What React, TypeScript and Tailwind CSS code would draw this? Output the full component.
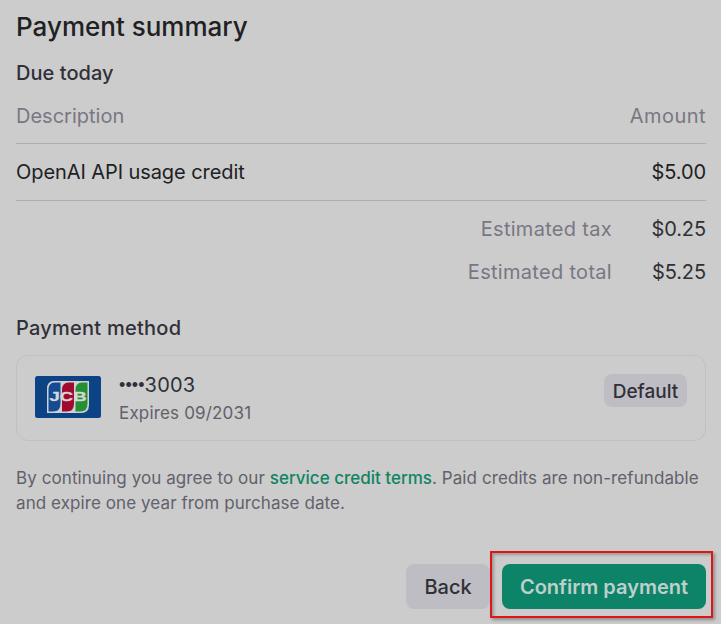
import React from "react";

function JcbLogo() {
  return (
    <svg width="66" height="42" viewBox="0 0 66 42" className="mb-0.5 block shrink-0">
      <rect width="66" height="42" rx="2.5" fill="#0b4384" />
      <path d="M19 5H54V29Q54 37 46 37H12V13Q12 5 19 5Z" fill="#cfd2d3" />
      <path d="M19.500 6.500H25.500V27.500Q25.500 35.500 18 35.500H13.500V14Q13.500 6.500 19.500 6.500Z" fill="#164a91" />
      <path d="M33.500 6.500H39V27.500Q39 35.500 32 35.500H27V14Q27 6.500 33.500 6.500Z" fill="#a3092f" />
      <path d="M47 6.500H52.500V27.500Q52.500 35.500 45.500 35.500H40.500V14Q40.500 6.500 47 6.500Z" fill="#249033" />
      <text x="14.500" y="25.300" textLength="37" lengthAdjust="spacingAndGlyphs" fill="#d5d8da" stroke="#d5d8da" strokeWidth="0.3" fontSize="12.500" fontWeight="700" fontFamily="Liberation Sans, sans-serif">JCB</text>
    </svg>
  );
}

function TotalRow({ label, value }: { label: React.ReactNode; value: string }) {
  return (
    <div className="flex h-[43px] items-center justify-end text-[#303036]">
      <span className="tracking-[0.3px] text-[#797783]">{label}</span>
      <span className="w-[94px] text-right tracking-[-0.1px]">{value}</span>
    </div>
  );
}

export default function App() {
  return (
    <main className="h-[624px] w-[721px] overflow-hidden bg-[#cccccc] pl-4 pr-[15px] font-['Inter','Liberation_Sans',sans-serif] text-[20px] leading-[30px] text-[#202123]">
      <h1 className="pt-[9px] text-[26px] font-medium leading-9"><span>Payment summary</span></h1>
      <h2 className="mt-[13px] font-medium tracking-[0.05px] text-[#303038]"><span>Due today</span></h2>
      <div className="mt-[7px] flex h-[49px] items-center justify-between border-b border-[#adadb0] pb-[7px] text-[#797783]">
        <span>Description</span>
        <span className="tracking-[0.45px]">Amount</span>
      </div>
      <div className="flex h-[57px] items-center justify-between border-b border-[#adadb0]">
        <span className="tracking-[-0.08px]">OpenAI API usage credit</span>
        <span className="tracking-[-0.1px]">$5.00</span>
      </div>
      <div className="mt-[6px]">
        <TotalRow label="Estimated tax" value="$0.25" />
        <TotalRow label="Estimated total" value="$5.25" />
      </div>
      <h2 className="mt-5 font-medium tracking-[0.25px] text-[#303038]"><span>Payment method</span></h2>
      <section className="mt-3 flex h-[86px] items-center rounded-xl border border-[#c0c0c3] px-[18px]">
        <JcbLogo />
        <div className="ml-[18px] text-[#303038]">
          <div className="flex h-[30px] items-center leading-[30px]">
            <span className="font-['Liberation_Sans',sans-serif] text-[18px] tracking-[0.1px]">••••</span>
            <span className="tracking-[0.2px]">3003</span>
          </div>
          <div className="text-[17px] leading-[26px] tracking-[0.17px] text-[#62616b]">Expires 09/2031</div>
        </div>
        <span className="mb-4 ml-auto flex h-[33px] w-[83px] items-center justify-center rounded-lg bg-[#bebdc4] pt-[3px] text-[19px] font-medium text-[#303038]">Default</span>
      </section>
      <p className="mt-[25px] whitespace-nowrap text-[17px] leading-[25px] tracking-[0.08px] text-[#62616b]">
        <span>By continuing you agree to our <a className="font-medium tracking-normal text-[#108463]">service credit terms</a>. Paid credits are non-refundable</span><br />
        <span>and expire one year from purchase date.</span>
      </p>
      <div className="mt-[48px] flex items-center justify-end gap-3">
        <button className="h-[45px] w-[84px] rounded-lg bg-[#bebdc4] font-medium text-[#303038]">Back</button>
        <div className="relative">
          <button className="block h-[45px] w-[204px] rounded-lg bg-[#0d8467] font-semibold text-[#bfcfcb]">Confirm payment</button>
          <div className="pointer-events-none absolute -left-3 -top-[13px] h-[67px] w-[223px] border-2 border-[#e01515] shadow-[2px_2px_3px_rgba(0,0,0,0.3),inset_2px_2px_3px_rgba(0,0,0,0.25)]" />
        </div>
      </div>
    </main>
  );
}
